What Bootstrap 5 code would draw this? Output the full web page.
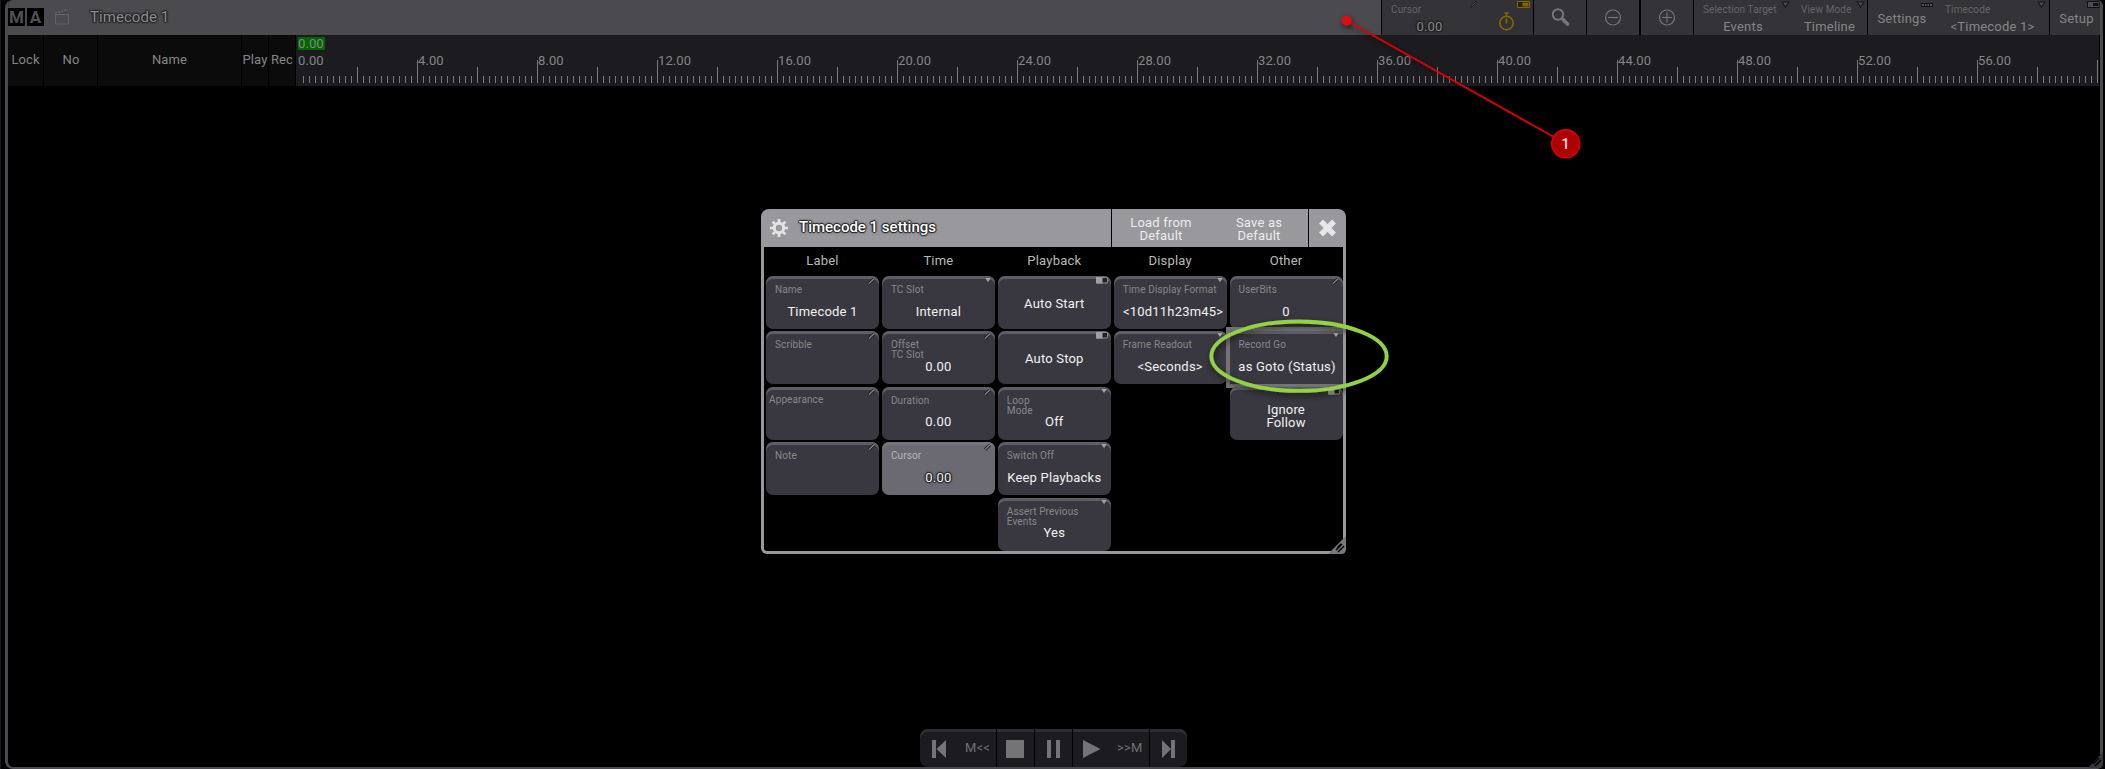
<!DOCTYPE html>
<html lang="en">
<head>
<meta charset="utf-8">
<title>Timecode 1</title>
<link href="https://cdn.jsdelivr.net/npm/bootstrap@5.3.0/dist/css/bootstrap.min.css" rel="stylesheet">
<style>
html,body{height:769px;overflow:hidden}
body{background:#000;color:#858587;font:13px/13px Roboto,"Liberation Sans",sans-serif;letter-spacing:.2px;border-left:1px solid #19191d}
svg{display:block}
.win{margin-left:4px;width:2098px;height:769px;border:solid #4a494e;border-width:0 3px 2px 3px;border-radius:8px 6px 6px 8px;background:#000;overflow:hidden}
.topbar{height:35px;background:#4b4a4f;margin:0 -3px}
.ma-logo{margin:8px 0 0 3px;gap:2px;height:18px}
.ma-logo span{width:17px;height:18px;background:#000;color:#4f4f54;font:700 17px/19px Roboto,sans-serif;letter-spacing:0;text-align:center}
.outlined{text-shadow:0 0 1px #222,1px 0 1px #222,-1px 0 1px #222,0 1px 1px #222,0 -1px 1px #222,0 0 3px #222}
.win-title{font-size:15px;line-height:18px;margin:8px 0 0 20px;letter-spacing:.05px;color:#8d8d8e}
.tool{background:#343338;height:35px;display:grid;position:relative;flex:none}
.tool>*{grid-area:1/1}
.tool + .split{border-left:1px solid #000}
.tlabel{font-size:10px;line-height:10px;letter-spacing:.12px;color:#656569;padding-top:5px}
.tval{padding-top:20px;text-align:center}
.mark-icon{position:absolute}
.colhead{background:#0b0b0b;height:51px;border-right:1px solid #000;line-height:49px;text-align:center;letter-spacing:.1px;white-space:nowrap}
.ruler{background:#1c1b20;height:51px;width:1803px;overflow:hidden}
.ruler .now{background:#006600;width:27px;height:13px;margin:2px 0 0 2px;letter-spacing:.1px;line-height:14px}
.ruler .lab{width:120px;flex:none;padding-left:1px;line-height:13px;letter-spacing:.1px}
.dlg{position:absolute;left:761px;top:209px;width:585px;height:345px;background:#98989d;border-radius:8px 8px 6px 6px;padding:0 3px 3px 3px}
.dlg-head{height:38px;margin:0 -3px;color:#fff}
.dlg-title{font-weight:500;font-size:15px;letter-spacing:0}
.dlg-btn{color:#ececec;text-align:center;line-height:13px;padding-top:7px}
.dlg-body{background:#000;height:304px;overflow:hidden;display:grid;grid-template-columns:repeat(5,113px);column-gap:2.9px;padding:0 2px;border-radius:0 0 3px 3px}
.coltitle{height:29px;line-height:27px;text-align:center;color:#b9b9ba}
.cell{height:52.7px;margin-bottom:2.8px;background:#393840;border-radius:7px;display:grid;position:relative;box-shadow:inset 0 3px #5f5e64;color:#f2f2f2}
.cell>*{grid-area:1/1}
.clabel{font-size:10px;line-height:10.4px;letter-spacing:.12px;color:#87878a;padding:8.6px 0 0 9px}
.cval{text-align:center;padding-top:28.5px;white-space:nowrap}
.cval.solo{padding-top:20.9px}
.cell.cur{background:#6b6a72;box-shadow:inset 0 3px #75747b}
.cell.cur .clabel{color:#b5b5b8}
.cell.sel{outline:4px solid #747476;outline-offset:0;border-radius:0;background:#393840}
.mk{position:absolute;right:3px;top:1px}
.transport{position:absolute;left:920px;top:729px;width:267px;height:38px;border-radius:8px;overflow:hidden;background:#1c1b20;box-shadow:inset 0 3px #2f2e32;color:#707072}
.transport>div{height:38px;border-right:1px solid #000}
.transport>div:last-child{border:0}
.notes{position:absolute;left:0;top:0;pointer-events:none}
.grip{position:absolute}
</style>
</head>
<body>
<svg width="0" height="0" class="position-absolute">
<defs>
<symbol id="pen" viewBox="0 0 8 8"><path d="M1 6.600L6 1.800" stroke="#202024" stroke-width="3"/><path d="M1 6.600L6 1.800" stroke="#8b8b8e" stroke-width="1.200"/></symbol>
<symbol id="drop" viewBox="0 0 8 6"><path d="M.5.5h7L4 5.500z" fill="#a2a2a5" stroke="#333" stroke-width=".5"/></symbol>
<symbol id="tog" viewBox="0 0 12 7"><path d="M.5.5h11v5.500H.5z" fill="#222226" stroke="#8d8d91"/><path d="M0 0h6.500v6.500H0z" fill="#a0a0a4"/></symbol>
<symbol id="dropdim" viewBox="0 0 9 7"><path d="M1 1h7L4.500 6z" fill="#4c4c50" stroke="#17171a" stroke-width="1.200"/></symbol>
</defs></svg>

<div class="win">
 <div class="topbar d-flex">
  <div class="ma-logo d-flex"><span>M</span><span>A</span></div>
  <svg width="17" height="18" style="margin:8px 0 0 9px" viewBox="0 0 17 18" fill="none" stroke="#656464"><path d="M2.500 6.500h13v9.500h-13z"/><path d="M2 5L15 1.500" stroke-dasharray="2 1.200" stroke-width="1.500"/></svg>
  <div class="win-title outlined">Timecode 1</div>
  <div class="d-flex ms-auto" style="width:722px;background:#000">
   <div class="tool" style="width:99px;border-left:1px solid #000"><span class="tlabel" style="padding-left:9px">Cursor</span><span class="tval outlined" style="padding-right:3px">0.00</span>
    <svg class="mark-icon" style="left:87px;top:0" width="9" height="9" viewBox="0 0 9 9"><path d="M1.500 7.500l1-2.500L7 1l1 1L3.500 6.500z" fill="#4b4b4f" stroke="#1c1c20"/></svg></div>
   <div class="tool" style="width:53px;background:#323135"><svg width="53" height="35" fill="none" stroke="#806800" stroke-width="1.600"><circle cx="26.500" cy="23" r="6.700"/><path d="M26.500 18.500v5M26.500 13v4M24.500 13h4.200"/><path d="M37.500 1.500h12v6h-12z" fill="#2b2300" stroke-width="1"/><path d="M42.500 2.500h6v4h-6z" fill="#806800" stroke="none"/></svg></div>
   <div class="tool split" style="width:53px"><svg width="52" height="35" fill="none" stroke="#77777a"><circle cx="24" cy="14.500" r="5.200" stroke-width="2"/><path d="M28 18.500l2 2" stroke-width="2"/><path d="M29.500 20l4 4" stroke-width="3.800" stroke-linecap="round"/></svg></div>
   <div class="tool split" style="width:53px"><svg width="52" height="35" fill="none" stroke="#77777a" stroke-width="1.200"><circle cx="26" cy="17.500" r="7.500"/><path d="M21 17.500h10"/></svg></div>
   <div class="tool split" style="width:54px;border-left-width:2px"><svg width="52" height="35" fill="none" stroke="#77777a" stroke-width="1.200"><circle cx="26" cy="17.500" r="7.500"/><path d="M21 17.500h10M26 12.500v10"/></svg></div>
   <div class="tool split" style="width:99px"><span class="tlabel" style="padding-left:9px">Selection Target</span><span class="tval">Events</span><svg class="mark-icon" style="left:87px;top:1px" width="9" height="7"><use href="#dropdim"/></svg></div>
   <div class="tool" style="width:75px"><span class="tlabel" style="padding-left:9px">View Mode</span><span class="tval">Timeline</span><svg class="mark-icon" style="left:64px;top:1px" width="9" height="7"><use href="#dropdim"/></svg></div>
   <div class="tool split" style="width:69px"><span class="tval" style="padding-top:12px">Settings</span><svg class="mark-icon" style="left:53px;top:3px" width="12" height="4"><path d="M0 0h12v4H0z" fill="#111"/><path d="M1 1h2v2H1zM4 1h1.500v2H4zM6.500 1H8v2H6.500zM9 1h2v2H9z" fill="#58585c"/></svg></div>
   <div class="tool" style="width:113px"><span class="tlabel" style="padding-left:9px">Timecode</span><span class="tval">&lt;Timecode 1&gt;</span><svg class="mark-icon" style="left:101px;top:1px" width="9" height="7"><use href="#dropdim"/></svg></div>
   <div class="tool split" style="width:54px"><span class="tval" style="padding-top:12px">Setup</span><svg class="mark-icon" style="left:37px;top:1px" width="13" height="7"><path d="M.5.5h11.500v6H.5z" fill="#4e4e52" stroke="#101013"/><path d="M6 2h5v3H6z" fill="#101013"/></svg></div>
  </div>
 </div>
 <div class="d-flex" style="background:#000">
  <div class="colhead" style="width:36px">Lock</div><div class="colhead" style="width:54px;padding-left:1px">No</div><div class="colhead" style="width:144px">Name</div><div class="colhead" style="width:27px">Play</div><div class="colhead" style="width:27px">Rec</div>
  <div class="ruler">
   <div class="now">0.00</div>
   <div class="d-flex" id="labels" style="margin:4px 0 0 1px"></div>
   <svg width="1803" height="24" style="margin-top:-7px" id="ticks" stroke="#7b7b7d"></svg>
  </div>
 </div>
</div>
<svg class="grip" style="left:2088px;top:752px" width="15" height="17"><path d="M15 0v12q0 4-4 4H0z" fill="#38383c"/><path d="M5 12l6-6M7 14l6-6" stroke="#000" stroke-width="1.500"/></svg>

<section class="dlg">
 <div class="dlg-head d-flex">
  <svg width="20" height="20" viewBox="-10 -10 20 20" style="margin:9px 0 0 8px"><g fill="none" stroke="#e4e4e4"><circle r="4.700" stroke-width="3"/><path stroke-width="2.700" d="M0-5.500V-9M0 5.500V9M5.500 0H9M-5.500 0H-9M3.900-3.900L6.400-6.400M-3.900-3.900L-6.400-6.400M3.900 3.900L6.400 6.400M-3.900 3.900L-6.400 6.400"/></g></svg>
  <div class="dlg-title outlined" style="margin:12px 0 0 10px;width:312px">Timecode 1 settings</div>
  <div class="dlg-btn" style="width:99px;border-left:1px solid #000">Load from<br>Default</div>
  <div class="dlg-btn" style="width:98px">Save as<br>Default</div>
  <div style="width:38px;border-left:1px solid #000"><svg width="36" height="38" stroke="#e6e6e6" stroke-width="5.500"><path d="M12 12.500l13 13M25 12.500l-13 13"/></svg></div>
 </div>
 <div class="dlg-body">
  <div><div class="coltitle">Label</div>
   <div class="cell"><span class="clabel">Name</span><span class="cval">Timecode 1</span><svg class="mk" width="8" height="8"><use href="#pen"/></svg></div>
   <div class="cell"><span class="clabel">Scribble</span><svg class="mk" width="8" height="8"><use href="#pen"/></svg></div>
   <div class="cell"><span class="clabel" style="padding:7.600px 0 0 3px">Appearance</span><svg class="mk" width="8" height="8"><use href="#pen"/></svg></div>
   <div class="cell"><span class="clabel">Note</span><svg class="mk" width="8" height="8"><use href="#pen"/></svg></div>
  </div>
  <div><div class="coltitle">Time</div>
   <div class="cell"><span class="clabel">TC Slot</span><span class="cval">Internal</span><svg class="mk" width="8" height="6"><use href="#drop"/></svg></div>
   <div class="cell"><span class="clabel">Offset<br>TC Slot</span><span class="cval">0.00</span><svg class="mk" width="8" height="8"><use href="#pen"/></svg></div>
   <div class="cell"><span class="clabel">Duration</span><span class="cval">0.00</span><svg class="mk" width="8" height="8"><use href="#pen"/></svg></div>
   <div class="cell cur"><span class="clabel">Cursor</span><span class="cval outlined">0.00</span><svg class="mk" width="8" height="8"><use href="#pen"/></svg></div>
  </div>
  <div><div class="coltitle">Playback</div>
   <div class="cell"><span class="cval solo">Auto Start</span><svg class="mk" width="12" height="7"><use href="#tog"/></svg></div>
   <div class="cell"><span class="cval solo">Auto Stop</span><svg class="mk" width="12" height="7"><use href="#tog"/></svg></div>
   <div class="cell"><span class="clabel">Loop<br>Mode</span><span class="cval">Off</span><svg class="mk" width="8" height="6"><use href="#drop"/></svg></div>
   <div class="cell"><span class="clabel">Switch Off</span><span class="cval">Keep Playbacks</span><svg class="mk" width="8" height="6"><use href="#drop"/></svg></div>
   <div class="cell"><span class="clabel">Assert Previous<br>Events</span><span class="cval">Yes</span><svg class="mk" width="8" height="6"><use href="#drop"/></svg></div>
  </div>
  <div><div class="coltitle">Display</div>
   <div class="cell"><span class="clabel">Time Display Format</span><span class="cval" style="padding-left:6px">&lt;10d11h23m45&gt;</span><svg class="mk" width="8" height="6"><use href="#drop"/></svg></div>
   <div class="cell"><span class="clabel">Frame Readout</span><span class="cval">&lt;Seconds&gt;</span><svg class="mk" width="8" height="6"><use href="#drop"/></svg></div>
  </div>
  <div><div class="coltitle">Other</div>
   <div class="cell"><span class="clabel">UserBits</span><span class="cval">0</span><svg class="mk" width="8" height="8"><use href="#pen"/></svg></div>
   <div class="cell sel"><span class="clabel">Record Go</span><span class="cval" style="padding-left:2px">as Goto (Status)</span><svg class="mk" width="8" height="6"><use href="#drop"/></svg></div>
   <div class="cell"><span class="cval solo" style="padding-top:16.500px">Ignore<br>Follow</span><svg class="mk" width="12" height="7"><use href="#tog"/></svg></div>
  </div>
 </div>
 <svg class="grip" style="right:0;bottom:0" width="18" height="18"><path d="M18 0v13q0 5-5 5H0z" fill="#77777d"/><path d="M8 14l6-6M10 16l6-6M9.500 11.500L13 8" stroke="#000" stroke-width="1.500"/></svg>
</section>

<div class="transport d-flex">
 <div style="width:77px" class="d-flex"><svg width="45" height="38" fill="#747476"><path d="M12 11h4v18h-4zM26 11v18l-9.500-9z"/></svg><span style="padding-top:12px">M&lt;&lt;</span></div>
 <div style="width:38px"><svg width="37" height="38" fill="#747476"><path d="M9 11h18v18H9z"/></svg></div>
 <div style="width:38px"><svg width="37" height="38" fill="#747476"><path d="M12 11h4v18h-4zM21 11h4v18h-4z"/></svg></div>
 <div style="width:77px" class="d-flex"><svg width="44" height="38" fill="#747476"><path d="M10 11v18l17.500-9z"/></svg><span style="padding-top:12px">&gt;&gt;M</span></div>
 <div style="width:37px"><svg width="37" height="38" fill="#747476"><path d="M12 11v18l9-9zM21 11h4v18h-4z"/></svg></div>
</div>

<svg class="notes" width="2105" height="769">
 <defs><filter id="sh" x="-20%" y="-20%" width="140%" height="150%"><feDropShadow dx="1" dy="3" stdDeviation="3" flood-color="#000" flood-opacity=".6"/></filter></defs>
 <g filter="url(#sh)"><ellipse cx="1299" cy="356.200" rx="87.700" ry="34.700" fill="none" stroke="#93d243" stroke-width="3.800"/></g>
 <g filter="url(#sh)"><path d="M1346.500 20.500L1553 136.500" stroke="#d80000" stroke-width="2"/><circle cx="1346.500" cy="20.500" r="5" fill="#df0b0b"/></g>
 <circle cx="1565.700" cy="143.800" r="14" fill="#ad0000" stroke="#e00000" stroke-width="1.500"/>
 <text x="1565.700" y="149" fill="#f3dada" font-size="15" text-anchor="middle" font-family="Roboto" font-weight="500">1</text>
</svg>

<script>
const labels=document.getElementById('labels');
for(let i=0;i<15;i++){const s=document.createElement('span');s.className='lab';s.textContent=(i*4)+'.00';labels.append(s);}
// one tick per 0.2 s, taller every 2 s and every 4 s
let t='';
for(let i=1;i<=300;i++){const y=i%20===0?0:i%10===0?7:16;t+=`<path d="M${i*6+1.5} ${y}V23"/>`;}
document.getElementById('ticks').innerHTML=t;
</script>
<script src="https://cdn.jsdelivr.net/npm/bootstrap@5.3.0/dist/js/bootstrap.bundle.min.js"></script>
</body>
</html>
